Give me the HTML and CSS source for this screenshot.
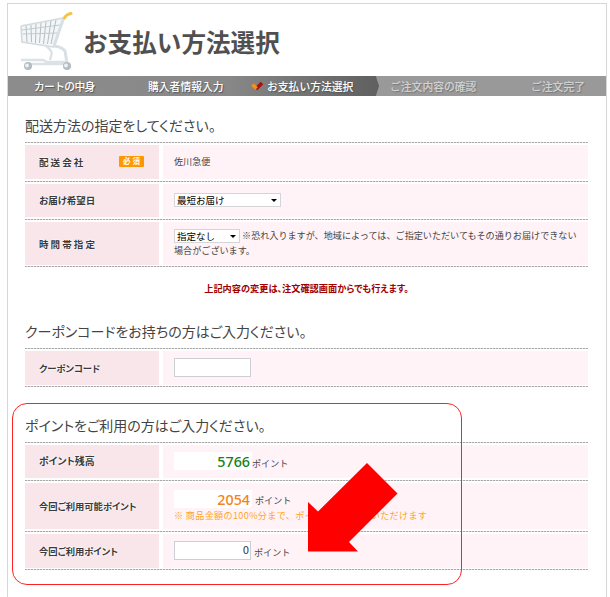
FILE: index.html
```html
<!DOCTYPE html>
<html lang="ja">
<head>
<meta charset="utf-8">
<title>お支払い方法選択</title>
<link rel="stylesheet" href="styles.css">
</head>
<body>
<main class="page">
  <header class="head">
    <svg class="cart" viewBox="0 0 56 62" width="56" height="62" fill="none">
      <path d="M2 16 L44 8 L35 35 L3 32 Z" fill="#f3f6f8"/>
      <g stroke="#b4bcc1" stroke-width="1">
        <path d="M7 16 L8 32M12 15 L12.500 32M17 14 L16.500 33M22 13 L20.500 33M27 12 L24.500 34M32 11 L28.500 34M37 10 L32 34"/>
        <path d="M3 20 L41 15M3.500 24 L39 23" stroke="#c3cbd0"/>
      </g>
      <path d="M2 16 L44 8M2 16 L3 32 L35 37" stroke="#d3dade" stroke-width="1.600"/>
      <path d="M45 7 L35 36 Q43 37 46 41 L48 53" stroke="#d9e0e4" stroke-width="3"/>
      <path d="M26 35 Q35 42 32 46 L31 50M2 50 H24L28 52H48M6 54 H45" stroke="#dbe1e5" stroke-width="2.300"/>
      <path d="M45.500 8 Q47 4.500 52 3.500" stroke="#f5c445" stroke-width="3" stroke-linecap="round"/>
      <circle cx="9" cy="56" r="4" fill="#b4bcc1"/><circle cx="8" cy="55.500" r="2" fill="#eef1f3"/>
      <circle cx="48" cy="56" r="4" fill="#b4bcc1"/><circle cx="47" cy="55.500" r="2" fill="#eef1f3"/>
    </svg>
    <h1>お支払い方法選択</h1>
  </header>
  <ol class="steps">
    <li class="first">カートの中身</li>
    <li>購入者情報入力</li>
    <li class="current"><svg class="check" viewBox="0 0 13 11" width="13" height="11" fill="none"><path d="M5 8 L11 2" stroke="#a41208" stroke-width="3.600"/><path d="M1.500 3.500 L5.500 7.500" stroke="#f59118" stroke-width="3.600"/></svg>お支払い方法選択</li>
    <li class="next">ご注文内容の確認</li>
    <li class="next">ご注文完了</li>
  </ol>

  <section class="delivery">
    <h2>配送方法の指定をしてください。</h2>
    <div class="row">
      <div class="label"><span class="wide">配送会社</span><span class="badge">必須</span></div>
      <div class="value company">佐川急便</div>
    </div>
    <div class="row">
      <div class="label">お届け希望日</div>
      <div class="value"><span class="select date">最短お届け</span></div>
    </div>
    <div class="row time">
      <div class="label"><span class="wide">時間帯指定</span></div>
      <div class="value"><p><span class="select hour">指定なし</span> <span class="hint">※恐れ入りますが、地域によっては、ご指定いただいてもその通りお届けできない</span><br>場合がございます。</p></div>
    </div>
    <p class="notice">上記内容の変更は、注文確認画面からでも行えます。</p>
  </section>

  <section class="coupon">
    <h2>クーポンコードをお持ちの方はご入力ください。</h2>
    <div class="row">
      <div class="label tight">クーポンコード</div>
      <div class="value"><input class="field" type="text"></div>
    </div>
  </section>

  <section class="points">
    <h2>ポイントをご利用の方はご入力ください。</h2>
    <div class="row">
      <div class="label balance">ポイント残高</div>
      <div class="value"><span class="amount green">5766</span><span class="unit">ポイント</span></div>
    </div>
    <div class="row usable">
      <div class="label tight">今回ご利用可能ポイント</div>
      <div class="value stack">
        <div class="line"><span class="amount orange">2054</span><span class="unit gap">ポイント</span></div>
        <div class="limit">※ 商品金額の100%分まで、ポイントをご利用いただけます</div>
      </div>
    </div>
    <div class="row">
      <div class="label tight">今回ご利用ポイント</div>
      <div class="value"><input class="field use" type="text" value="0"><span class="unit near">ポイント</span></div>
    </div>
    <div class="frame"></div>
    <svg class="arrow" viewBox="0 0 90 90" width="90" height="90"><path d="M59 0 L89.500 30.500 L41 79 L50 88.500 H0 V39 L10 48.500 Z" fill="#f00"/></svg>
  </section>
</main>
</body>
</html>
```
FILE: styles.css
```css
* { box-sizing: border-box; }
body {
  margin: 0;
  height: 597px;
  overflow: hidden;
  background: #fff;
  color: #444;
  font-family: "Noto Sans CJK JP", sans-serif;
  font-size: 9.1px;
}
h1, h2, p, ol { margin: 0; padding: 0; font-weight: normal; }
.page {
  width: 600px;
  height: 620px;
  margin: 3px 0 0 7px;
  border: 1px solid #d6d6d6;
}
.head { display: flex; height: 72px; padding-left: 11px; }
.cart { margin-top: 6px; }
h1 {
  margin-left: 8px;
  color: #505050;
  font-size: 24.6px;
  font-weight: bold;
  line-height: 74px;
}
.steps {
  display: grid;
  grid-template-columns: 114px 103px 139px 141px 1fr;
  height: 20px;
  padding-left: 26px;
  list-style: none;
  background: linear-gradient(90deg, #8c8c8c 0, #888 220px, #606060 368px, transparent 368px), #999;
  position: relative;
  color: #fff;
  font-size: 10.8px;
  font-weight: 500;
  line-height: 20px;
  white-space: nowrap;
  text-shadow: 1px 1px 1px #555;
}
.steps::after {
  content: "";
  position: absolute;
  left: 367px;
  width: 4px;
  height: 20px;
  background: #606060;
  clip-path: polygon(0 0, 20% 0, 100% 50%, 20% 100%, 0 100%);
}
.first { letter-spacing: -0.7px; }
.next { color: #d2d2d2; text-shadow: 1px 1px 1px #777; }
.check { margin-right: 3px; vertical-align: -1px; }
section { position: relative; margin: 0 18px 0 17px; }
h2 {
  height: 27px;
  color: #444;
  font-size: 14px;
  line-height: 20px;
  white-space: nowrap;
  font-feature-settings: "palt";
}
.delivery { padding-top: 19px; }
.row {
  display: grid;
  grid-template-columns: 134px 1fr;
  column-gap: 4px;
  height: 38.5px;
  padding: 3px 0 2px;
  background: repeating-linear-gradient(90deg, #aaa 0 2px, #ddd 2px 3px) top / 100% 1px no-repeat;
}
.time { height: 48px; }
.row:nth-of-type(3), .coupon .row {
  background: repeating-linear-gradient(90deg, #aaa 0 2px, #ddd 2px 3px) top / 100% 1px no-repeat, repeating-linear-gradient(90deg, #aaa 0 2px, #ddd 2px 3px) bottom / 100% 1px no-repeat;
}
.label {
  display: flex;
  align-items: center;
  padding-left: 14px;
  background: #f8e6eb;
  color: #3a3a3a;
  font-size: 9.5px;
  font-weight: bold;
  white-space: nowrap;
  font-feature-settings: "palt";
  text-shadow: 0 0 2px #fff, 0 0 2px #fff;
}
.tight { font-size: 9.3px; }
.balance { font-size: 9.9px; }
.wide { letter-spacing: 2.1px; }
.badge {
  width: 25px;
  height: 11px;
  margin-left: auto;
  margin-right: 15px;
  border-radius: 1px;
  background: #ff9800;
  color: #fff;
  font-size: 7.5px;
  font-weight: bold;
  letter-spacing: 2px;
  line-height: 10px;
  text-align: center;
  text-indent: 2px;
  text-shadow: none;
}
.value {
  display: flex;
  align-items: center;
  padding-left: 11px;
  background: #fff3f7;
  white-space: nowrap;
}
.company { padding-bottom: 2px; }
.value p { line-height: 14px; margin-top: -2px; }
.select {
  display: inline-block;
  position: relative;
  height: 14px;
  border: 1px solid #d5d5d9;
  padding-left: 2px;
  background: #fff;
  color: #000;
  font-size: 9.5px;
  line-height: 13px;
}
.select::after {
  content: "";
  position: absolute;
  right: 3px;
  top: 5px;
  border: 3px solid transparent;
  border-top-color: #000;
  border-bottom: 0;
}
.date { width: 107px; }
.hour { width: 66px; vertical-align: middle; }
.notice {
  margin-top: 12px;
  margin-bottom: 1px;
  color: #a00000;
  font-size: 9.2px;
  font-weight: bold;
  line-height: 18px;
  text-align: center;
  font-feature-settings: "palt";
}
.coupon { padding-top: 23px; }
.field {
  width: 77px;
  height: 19px;
  padding: 0 3px;
  border: 1px solid #ccd0d4;
  background: #fff;
}
.points { padding-top: 28px; }
.amount {
  width: 78px;
  height: 18px;
  padding-right: 2px;
  background: #fff;
  font: 500 14.3px/19px "Noto Sans", sans-serif;
  text-align: right;
}
.green { color: #178017; }
.orange { color: #f58220; }
.unit { padding-top: 3px; }
.gap { margin-left: 3px; }
.stack { flex-direction: column; align-items: flex-start; justify-content: center; }
.line { display: flex; height: 18px; }
.limit { color: #ffa51f; line-height: 14px; letter-spacing: 0.34px; }
.usable { height: 51px; }
.use { color: #333; font: 10px "DejaVu Sans", sans-serif; text-align: right; padding-right: 1px; }
.near { margin-left: 3px; }
.frame {
  position: absolute;
  left: -13px;
  top: 16px;
  width: 449.5px;
  height: 182px;
  border: 1px solid #f22;
  border-radius: 15px;
}
.arrow { position: absolute; left: 282.7px; top: 76px; }
```
